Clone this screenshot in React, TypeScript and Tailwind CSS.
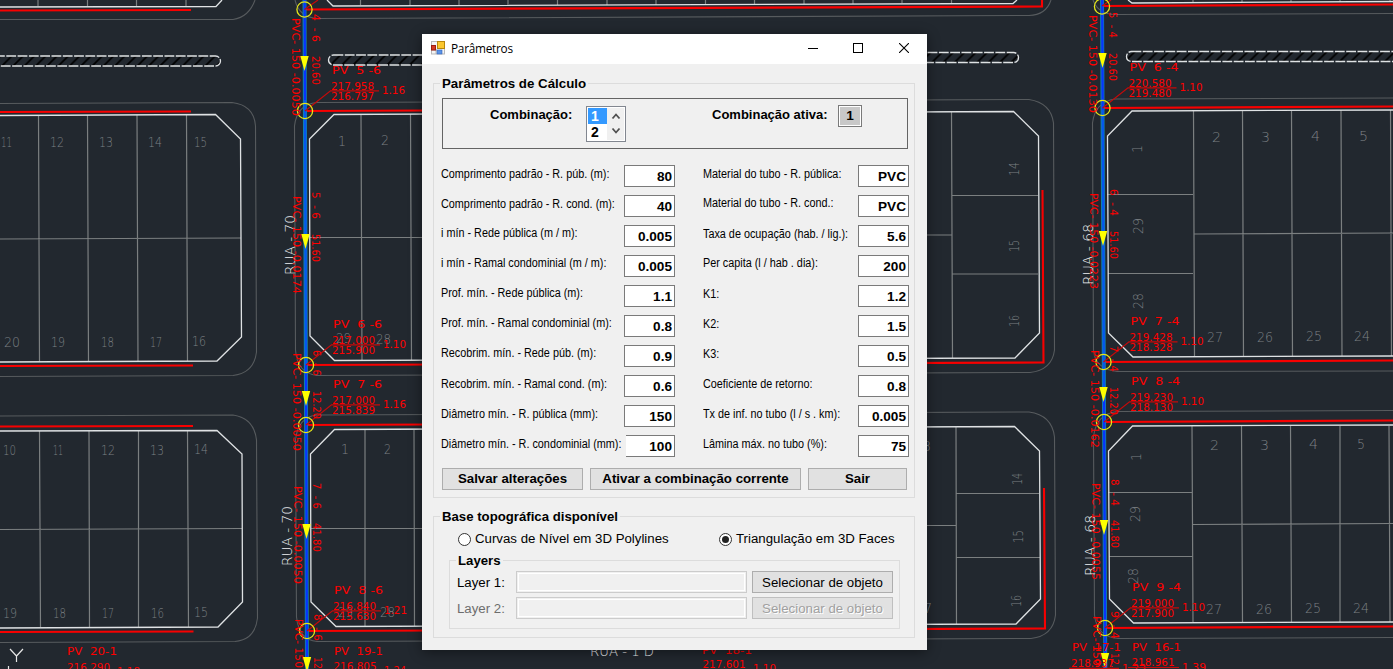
import React from "react";

type LabelProps = { x: number; y: number; w: number; children: string; turn?: number };

function RedText({ x, y, w, children, turn = 0 }: LabelProps) {
  return (
    <text
      x={x}
      y={y}
      textLength={w}
      lengthAdjust="spacingAndGlyphs"
      transform={`rotate(${turn} ${x} ${y})`}
      className="fill-[#ff0000] font-['DejaVu_Sans',sans-serif] text-[9.7px] whitespace-pre"
    >
      {children}
    </text>
  );
}

function LotText({ x, y, w, children, turn = 0 }: LabelProps) {
  return (
    <text
      x={x}
      y={y}
      textLength={w}
      lengthAdjust="spacingAndGlyphs"
      transform={`rotate(${turn} ${x} ${y})`}
      className="fill-[#7c8084] font-['DejaVu_Sans',sans-serif] text-[14.5px] font-extralight"
    >
      {children}
    </text>
  );
}

function StreetText({ x, y, w, children, turn = 0 }: LabelProps) {
  return (
    <text
      x={x}
      y={y}
      textLength={w}
      lengthAdjust="spacingAndGlyphs"
      transform={`rotate(${turn} ${x} ${y})`}
      className="fill-[#eef0f2] font-['DejaVu_Sans',sans-serif] text-[14.5px] font-extralight whitespace-pre"
    >
      {children}
    </text>
  );
}

const nodes = [
  { cx: 305, cy: 111, pv: "PV  5 -6", up: "217.958", low: "216.797", r: "1.16" },
  { cx: 306, cy: 365, pv: "PV  6 -6", up: "217.000", low: "215.900", r: "1.10" },
  { cx: 306, cy: 425, pv: "PV  7 -6", up: "217.000", low: "215.839", r: "1.16" },
  { cx: 307, cy: 631, pv: "PV  8 -6", up: "216.840", low: "215.630", r: "1.21" },
  { cx: 1102.5, cy: 108, pv: "PV  6 -4", up: "220.580", low: "219.480", r: "1.10" },
  { cx: 1103.5, cy: 362, pv: "PV  7 -4", up: "219.428", low: "218.328", r: "1.10" },
  { cx: 1104, cy: 422, pv: "PV  8 -4", up: "219.230", low: "218.130", r: "1.10" },
  { cx: 1105, cy: 628, pv: "PV  9 -4", up: "219.000", low: "217.900", r: "1.10" },
];

const pipeTexts: [number, number, number, string][] = [
  [291.5, 18, 98, "PVC- 150 -0.0050"],
  [311.5, 14, 28, "4  - 6"],
  [311.5, 56, 29, "20.60"],
  [292.5, 196, 98, "PVC- 150 -0.0174"],
  [312, 192, 27, "5  - 6"],
  [312, 234, 28, "51.60"],
  [293, 353, 98, "PVC- 150 -0.0050"],
  [312.5, 350, 26, "6  - 6"],
  [312.5, 391, 28, "12.20"],
  [293.5, 486, 98, "PVC- 150 -0.0050"],
  [313, 483, 26, "7  - 6"],
  [313, 523, 29, "41.80"],
  [294.5, 619, 49, "PVC- 150"],
  [314, 614, 27, "8  - 6"],
  [314, 657, 12, "12"],
  [1089, 15, 98, "PVC- 150 -0.0130"],
  [1108.5, 12, 26, "5  - 4"],
  [1108.5, 53, 28, "20.60"],
  [1090, 193, 96, "PVC- 150 -0.0223"],
  [1109.5, 189, 27, "6  - 4"],
  [1109.5, 231, 28, "51.60"],
  [1091, 350, 98, "PVC- 150 -0.0162"],
  [1110, 346, 26, "7  - 4"],
  [1110, 387, 28, "12.20"],
  [1091.5, 483, 97, "PVC- 150 -0.0055"],
  [1110.5, 479, 27, "8  - 4"],
  [1110.5, 520, 28, "41.80"],
  [1092.5, 616, 50, "PVC- 150"],
  [1111, 611, 28, "9  - 4"],
  [1111, 653, 15, "12."],
];

const lots: [number, number, number, string][] = [
  [1, 146.5, 11, "11"], [50, 146.5, 14, "12"], [99, 146.5, 14, "13"], [148, 146.5, 14, "14"], [194, 146.5, 13, "15"],
  [4, 347, 16, "20"], [51, 347, 14, "19"], [101, 346.5, 13, "18"], [150, 346.5, 12, "17"], [192, 346, 14, "16"],
  [3, 454.5, 13, "10"], [53, 454.5, 10, "11"], [101, 454.5, 14, "12"], [150, 454.5, 14, "13"], [194, 454, 14, "14"],
  [3, 618, 14, "19"], [53, 618, 13, "18"], [102, 617.5, 12, "17"], [151, 617.5, 13, "16"], [194, 617, 14, "15"],
  [338, 146, 8, "1"], [381, 145, 8, "2"], [336, 343, 15, "29"], [376, 344, 15, "28"],
  [341, 454, 8, "1"], [384, 453.5, 7, "2"], [338, 617, 15, "29"], [380, 617, 15, "28"],
  [1212, 142, 9, "2"], [1261, 142, 9, "3"], [1311, 141, 9, "4"], [1359, 140.5, 9, "5"],
  [1207, 341.5, 16, "27"], [1257, 341.5, 16, "26"], [1306, 341, 16, "25"], [1354, 340.5, 16, "24"],
  [1210, 449.5, 9, "2"], [1260, 449.5, 9, "3"], [1309, 449, 9, "4"], [1357, 449, 8, "5"],
  [1206, 613.5, 16, "27"], [1256, 613.5, 16, "26"], [1305, 613, 16, "25"], [1353, 612.5, 16, "24"],
  [923, 451, 8, "3"], [924, 613, 8, "7"],
];

const turnedLots: [number, number, number, string][] = [
  [1019, 176, 14, "14"], [1019, 252, 12, "15"], [1019, 327, 12, "16"],
  [1022, 485, 12, "14"], [1023, 543, 13, "15"], [1021, 607, 12, "16"],
  [1142, 153, 8, "1"], [1143, 234, 16, "29"], [1143, 309, 16, "28"],
  [1141, 461, 8, "1"], [1140, 522, 16, "29"], [1138, 584, 16, "28"],
];

const arrows: [number, number][] = [
  [304.5, 56], [305.5, 234], [306, 391], [306.5, 524], [307, 657],
  [1102.5, 53], [1103, 231], [1103.5, 387], [1104, 520], [1105, 653],
];

function Drawing() {
  return (
    <svg width="1393" height="669" viewBox="0 0 1393 669" className="block bg-[#22282f]">
      <defs>
        <pattern id="hatch" width="11.3" height="11.3" patternUnits="userSpaceOnUse">
          <path d="M-2 13.3L13.3 -2M-2 2L2 -2M9.300 13.300L13.300 9.300" stroke="#000" strokeWidth="1.7" />
        </pattern>
      </defs>

      <g fill="none" stroke="#575b5e" strokeWidth="1.1">
        <path d="M0 19.5H233Q249 17 255 0M295 0Q299 17 317 18.5L1029 15.5Q1046 15 1051 0M1093 0Q1098 14 1115 14.5L1393 13.5" />
        <path d="M0 103.5L232 102.5Q254 105 255.5 126L256.5 352Q254 373 233 375.5L0 376.5" />
        <path d="M0 416L233 415Q254 418 256.5 440L257.5 618Q255 640 235 641.5L0 642.5" />
        <path d="M295.5 350L294.5 126Q297 104 317 102.5L1029 99.5Q1051 103 1053.5 123L1054.5 350Q1052 370 1030 372.5L317 375.5Q297 373 295.5 350Z" />
        <path d="M295.5 440Q298 417 317 415L1029 412Q1052 415 1054.5 437L1055.5 615Q1053 636 1031 638.5L317 641.5Q299 640 296.5 617Z" />
        <path d="M1393 98L1115 99Q1095 102 1092.5 123L1093.5 350Q1095 369 1117 371.5L1393 371" />
        <path d="M1393 410.5L1117 411.5Q1096 414 1093.5 437L1094.5 615Q1097 637 1118 638.5L1393 637.5" />
      </g>

      <g fill="none" stroke="#7b7f80" strokeWidth="1.2">
        <path d="M38 0V6M87.5 0V6M136.5 0V6M186 0V6M38.5 115L39.5 361M87.5 115L88.5 361M137 115L138 361M186.5 115L187.5 361M0 239L241 238" />
        <path d="M39.5 431L40.5 627M89 431L89.5 627M138.5 431V627M187.5 431L188.5 627M0 529.5L242 528.5" />
        <path d="M361 114L362 360M410.5 114L411.5 360M310 237.5H430M951.5 112L952.5 358M920 235H952M952 195.5H1038M952 274H1038" />
        <path d="M365 430V626M414 430L414.5 626M311 528.5H430M956 427L956.5 624M920 525.5H956M956 493.5H1039M956 557.5H1040" />
        <path d="M1193.5 111L1194.5 356M1242.5 111L1243.5 356M1291.5 111L1292.5 356M1341 110L1342 356M1390.5 110L1391.5 356M1107 194.5H1193M1108 273.5H1193M1194 234L1393 233" />
        <path d="M1192 426L1193 622M1241.5 426L1242.5 622M1290.5 426L1291.5 622M1340 426V622M1389 426L1390 622M1108 492.5H1192M1109 556.5H1193M1193 524.5L1393 523.5" />
        <path d="M360.5 0V5M410 0V5M459 0V5M508 0V5M557.5 0V5M607 0V5M656 0V5M705.5 0V4M754.5 0V4M804 0V4M853 0V4M902 0V3M951.5 0V3M1193 0V2M1242 0V2M1291 0V2M1340 0V2M1390 0V2" />
      </g>

      <g fill="none" stroke="#dfe2e4" strokeWidth="1.3">
        <path d="M0 7L216 6.5L222 0M327 0L333 6L1013 3.5L1017 0M1128 0L1132 3L1393 1.5" />
        <path d="M0 115.5L215.500 114.500L240.500 139L241.500 337L217 361L0 362" />
        <path d="M0 431L217 430.500L242 454L242.500 602L218 627L0 628" />
        <path d="M309.500 139L334 114.500L1013.500 111.500L1038.500 136L1039.500 333L1015 358L334.500 360.500L310 336Z" />
        <path d="M310.500 454L334.500 429.500L1014.500 426.500L1039.500 451L1040.500 599L1016 624L336 626.500L311 602Z" />
        <path d="M1393 110L1132 111L1107.500 136L1108.500 333L1133 357L1393 356" />
        <path d="M1393 425L1132.500 426L1108.500 451L1109.500 599L1133.500 623L1393 622" />
      </g>

      <g stroke="#dfe2e4" strokeWidth="1.3" fill="url(#hatch)">
        <rect x="-10" y="56" width="230.500" height="10" rx="5" strokeDasharray="9.800 1.500" />
        <rect x="328.500" y="55" width="120" height="10" rx="5" strokeDasharray="9.800 1.500" />
        <rect x="900" y="52.500" width="118.500" height="10" rx="5" strokeDasharray="9.800 1.500" />
        <rect x="1126.500" y="51.500" width="290" height="10" rx="5" strokeDasharray="9.800 1.500" />
      </g>

      {lots.map(([x, y, w, s], i) => (
        <LotText key={i} x={x} y={y} w={w}>{s}</LotText>
      ))}
      {turnedLots.map(([x, y, w, s], i) => (
        <LotText key={i} x={x} y={y} w={w} turn={-90}>{s}</LotText>
      ))}

      <StreetText x={295} y={275} w={60} turn={-90}>RUA - 70</StreetText>
      <StreetText x={292} y={566} w={60} turn={-90}>RUA - 70</StreetText>
      <StreetText x={1093} y={285} w={61} turn={-90}>RUA - 68</StreetText>
      <StreetText x={1095} y={576} w={61} turn={-90}>RUA - 68</StreetText>
      <StreetText x={590} y={656} w={64}>RUA - 1 D</StreetText>
      <path d="M10 649L16.500 656L23 649M16.500 656V662M8.500 666V669" fill="none" stroke="#e6e6e6" strokeWidth="1.200" />

      <g fill="none" stroke="#f80000" strokeWidth="2.100">
        <path d="M0 10.500L191 10M0 112L191 111.500M0 366L193 365.500M0 426.500L193 426M0 632L193.500 631.500" />
        <path d="M304.500 9.500L1042 6.500V0M305 111L430 110.500M306 365L1043.500 362.500L1042.500 190" />
        <path d="M306 425L430 424.500M307 631L1045 628.500L1044 488" />
        <path d="M1102 6L1393 4.500M1102.500 108L1393 106.500M1103.500 362L1393 360.500M1104 422L1393 420.500M1105 628L1393 626.500" />
      </g>

      <path d="M304.500 0L307 669M1102 0L1105.300 669" stroke="#117fae" strokeWidth="4" />
      <path d="M304.700 0L305 100M306 365L307 669M1102.200 0L1102.700 110M1104 400L1105.300 669" stroke="#0734ff" strokeWidth="2.200" />
      <path d="M305 100L306 365M1102.700 110L1104 400" stroke="#0556f0" strokeWidth="2.200" />

      {arrows.map(([x, y], i) => (
        <path key={i} d={`M${x - 4.2} ${y}H${x + 4.2}L${x} ${y + 15}Z`} fill="#ffff00" />
      ))}

      <path d="M304.500 9.500L318 0M1102 6L1111 0" stroke="#c40a0a" strokeWidth="1.200" />
      <g fill="none" stroke="#e4e61a" strokeWidth="1.300">
        <circle cx="304.500" cy="9.500" r="7.600" />
        <circle cx="1102" cy="6.500" r="7.600" />
      </g>

      {nodes.map((n) => {
        const x = n.cx + 27;
        const y = n.cy;
        return (
          <g key={n.pv}>
            <path
              d={`M${n.cx} ${y}L${n.cx + 25.5} ${y - 20.2}H${n.cx + 74}`}
              fill="none"
              stroke="#c40a0a"
              strokeWidth="1.2"
            />
            <circle cx={n.cx} cy={y} r="7.6" fill="none" stroke="#e4e61a" strokeWidth="1.3" />
            <RedText x={x} y={y - 37} w={49}>{n.pv}</RedText>
            <RedText x={x - 1} y={y - 21.3} w={43}>{n.up}</RedText>
            <RedText x={x - 1} y={y - 11} w={43}>{n.low}</RedText>
            <RedText x={x + 50} y={y - 17} w={23}>{n.r}</RedText>
          </g>
        );
      })}

      {pipeTexts.map(([x, y, w, s], i) => (
        <RedText key={i} x={x} y={y} w={w} turn={90}>{s}</RedText>
      ))}

      <RedText x={67} y={655} w={50}>PV  20-1</RedText>
      <RedText x={67} y={671} w={43}>216.290</RedText>
      <RedText x={117} y={674.5} w={23}>1.18</RedText>
      <RedText x={334} y={654.500} w={49}>PV  19-1</RedText>
      <RedText x={333.5} y={670} w={43}>216.805</RedText>
      <RedText x={384} y={674} w={22}>1.24</RedText>
      <RedText x={702} y={654} w={50}>PV  18-1</RedText>
      <RedText x={702.5} y={668} w={43}>217.601</RedText>
      <RedText x={753} y={672} w={23}>1.10</RedText>
      <RedText x={1072} y={651} w={49}>PV  17-1</RedText>
      <RedText x={1071} y={667} w={43}>218.937</RedText>
      <RedText x={1122} y={671.5} w={24}>1.23</RedText>
      <RedText x={1132} y={650.500} w={49}>PV  16-1</RedText>
      <RedText x={1131.500} y={666} w={43}>218.961</RedText>
      <RedText x={1182} y={671} w={24}>1.39</RedText>
      <path d="M1069 668.300H1119M1128 667.500H1179" stroke="#c40a0a" strokeWidth="1.200" />
    </svg>
  );
}

const leftRows = [
  { label: "Comprimento padrão - R. púb. (m):", value: "80", nudge: "pb-1" },
  { label: "Comprimento padrão - R. cond. (m):", value: "40", nudge: "pb-1" },
  { label: "i mín - Rede pública (m / m):", value: "0.005", nudge: "pb-1.5" },
  { label: "i mín - Ramal condominial (m / m):", value: "0.005", nudge: "pb-1.5" },
  { label: "Prof. mín. - Rede pública (m):", value: "1.1", nudge: "pb-1.5" },
  { label: "Prof. mín. - Ramal condominial (m):", value: "0.8", nudge: "pb-1.5" },
  { label: "Recobrim. mín. - Rede púb. (m):", value: "0.9", nudge: "pb-1.5" },
  { label: "Recobrim. mín. - Ramal cond. (m):", value: "0.6", nudge: "pb-1" },
  { label: "Diâmetro mín. - R. pública (mm):", value: "150", nudge: "pb-1" },
  { label: "Diâmetro mín. - R. condominial (mm):", value: "100", nudge: "pb-1" },
];

const rightRows = [
  { label: "Material do tubo - R. pública:", value: "PVC", nudge: "pb-1" },
  { label: "Material do tubo - R. cond.:", value: "PVC", nudge: "pb-1.5" },
  { label: "Taxa de ocupação (hab. / lig.):", value: "5.6", nudge: "pb-1" },
  { label: "Per capita (l / hab . dia):", value: "200", nudge: "pb-1.5" },
  { label: "K1:", value: "1.2", nudge: "pb-1" },
  { label: "K2:", value: "1.5", nudge: "pb-1" },
  { label: "K3:", value: "0.5", nudge: "pb-1" },
  { label: "Coeficiente de retorno:", value: "0.8", nudge: "pb-1" },
  { label: "Tx de inf. no tubo (l / s . km):", value: "0.005", nudge: "pb-1" },
  { label: "Lâmina máx. no tubo (%):", value: "75", nudge: "pb-1" },
];

function Row({ label, value, nudge, clipped }: { label: string; value: string; nudge: string; clipped?: boolean }) {
  return (
    <div className="flex h-[22px] items-center justify-between">
      <span className={`w-0 origin-left scale-x-[0.866] text-[12.5px] leading-4 whitespace-nowrap ${nudge}`}>{label}</span>
      <span
        className={`flex h-[22px] items-center justify-end border border-[#7a7a7a] bg-white pt-px pr-0.5 text-[13.6px] leading-none font-bold ${clipped ? "w-[49px] border-l-0" : "w-[51px]"}`}
      >
        {value}
      </span>
    </div>
  );
}

function Button({ children, className }: { children: string; className: string }) {
  return (
    <button className={`flex h-[22px] items-center justify-center border border-[#adadad] bg-[#e1e1e1] leading-none whitespace-nowrap ${className}`}>
      {children}
    </button>
  );
}

function Chevron({ d }: { d: string }) {
  return (
    <svg width="10" height="8" viewBox="0 0 10 8" className="block">
      <path d={d} fill="none" stroke="#505050" strokeWidth="1.8" />
    </svg>
  );
}

function Dialog() {
  return (
    <div className="flex h-[616px] w-[505px] flex-col bg-[#f0f0f0] text-[13.25px] text-black shadow-[0_2px_12px_rgba(0,0,0,0.45)]">
      <div className="flex h-[30px] shrink-0 items-center bg-white pl-[9px]">
        <svg width="14" height="14" viewBox="0 0 14 14" className="-mt-0.5">
          <rect x="0.5" y="0.5" width="13" height="12.500" fill="#f4f4f4" stroke="#b9b9b9" />
          <path d="M0 9H6M5 9V13" stroke="#b9b9b9" />
          <rect x="6.500" y="0.500" width="7" height="7" fill="#fbc72e" stroke="#b8860b" />
          <rect x="0.500" y="4.500" width="4" height="4.500" fill="#d33a22" stroke="#9c1d10" />
          <rect x="6" y="9" width="5" height="4" fill="#5b93e6" stroke="#3263b8" strokeWidth="0.600" />
        </svg>
        <span className="ml-[6px] font-['Open_Sans',sans-serif] text-[11.8px] leading-none tracking-[-0.25px]">Parâmetros</span>
        <div className="mr-[18px] mb-[2px] ml-auto flex items-center text-black">
          <svg width="10" height="10" viewBox="0 0 10 10" className="mr-[35px]"><path d="M0 5.500H10" stroke="currentColor" /></svg>
          <svg width="10" height="10" viewBox="0 0 10 10" className="mr-[36px]"><rect x="0.500" y="0.500" width="9" height="9" fill="none" stroke="currentColor" /></svg>
          <svg width="10" height="10" viewBox="0 0 10 10"><path d="M0 0L10 10M10 0L0 10" stroke="currentColor" strokeWidth="1.100" /></svg>
        </div>
      </div>

      <div className="flex flex-col pt-[11px] pr-[12px] pl-[11px]">
        <fieldset className="h-[423px] w-[482px] min-w-0 border border-[#dcdcdc] pr-[5px] pl-[7px]">
          <legend className="ml-[-1px] px-0.5 pb-px text-[13.3px] leading-4 font-bold">
            <span className="relative top-px">Parâmetros de Cálculo</span>
          </legend>
          <div className="mt-[6px] ml-[1px] flex h-[51px] w-[466px] items-start border border-[#646464] pt-[7px] pl-[47px]">
            <span className="w-[96px] text-[13px] leading-[18px] font-bold">Combinação:</span>
            <div className="flex h-[36px] w-[40px] border border-[#828790] bg-white p-px text-[14px] font-bold">
              <div className="flex w-[19px] flex-col leading-4">
                <span className="bg-[#3399ff] pl-[3px] text-white">1</span>
                <span className="pl-[3px]">2</span>
              </div>
              <div className="flex flex-1 flex-col items-center justify-between bg-[#f0f0f0] pt-[4px] pb-[5px]">
                <Chevron d="M1.500 6.500L5 2.500L8.500 6.500" />
                <Chevron d="M1.500 1.500L5 5.500L8.500 1.500" />
              </div>
            </div>
            <span className="ml-[86px] w-[126px] text-[13px] leading-[18px] font-bold">Combinação ativa:</span>
            <span className="mt-[-1px] flex h-[22px] w-[24px] items-center justify-center border border-[#7a7a7a] bg-white p-px">
              <span className="flex h-full w-full items-center justify-center bg-[#c8c8c8] text-[13.6px] leading-none font-bold">1</span>
            </span>
          </div>

          <div className="mt-[16px] flex gap-[28px]">
            <div className="flex w-[234px] shrink-0 flex-col gap-2">
              {leftRows.map((r, i) => (
                <Row key={i} {...r} clipped={i === 9} />
              ))}
            </div>
            <div className="flex w-[206px] shrink-0 flex-col gap-2">
              {rightRows.map((r, i) => (
                <Row key={i} {...r} />
              ))}
            </div>
          </div>

          <div className="mt-[11px] ml-[1px] flex gap-[7px] font-bold">
            <Button className="w-[141px]">Salvar alterações</Button>
            <Button className="w-[211px]">Ativar a combinação corrente</Button>
            <Button className="w-[99px]">Sair</Button>
          </div>
        </fieldset>

        <fieldset className="mt-[10px] h-[130px] w-[482px] min-w-0 border border-[#dcdcdc] pr-[13px] pl-[15px]">
          <legend className="ml-[-9px] px-0.5 text-[13.2px] leading-4 font-bold">
            <span className="relative top-px">Base topográfica disponível</span>
          </legend>
          <div className="mt-[7px] flex items-center pl-[9px] leading-4">
            <span className="mr-[4px] h-[13px] w-[13px] rounded-full border border-[#333] bg-white" />
            <span className="w-[244px]">Curvas de Nível em 3D Polylines</span>
            <span className="mr-[4px] flex h-[13px] w-[13px] items-center justify-center rounded-full border border-[#333] bg-white">
              <span className="h-[7px] w-[7px] rounded-full bg-[#222]" />
            </span>
            <span className="whitespace-nowrap">Triangulação em 3D Faces</span>
          </div>
          <fieldset className="mt-[5px] h-[77px] w-[451px] min-w-0 border border-[#dcdcdc] pr-[5px] pl-[7px]">
            <legend className="ml-[-1px] px-0.5 text-[13.2px] leading-4 font-bold">
              <span className="relative top-px">Layers</span>
            </legend>
            <div className="mt-[3px] flex flex-col gap-1">
              <div className="flex items-start">
                <span className="w-[59px] pt-[4px] leading-4">Layer 1:</span>
                <span className="mr-[5px] h-[22px] w-[231px] border border-[#ccc] p-px"><span className="block h-full w-full border border-white" /></span>
                <Button className="w-[141px] pt-px">Selecionar de objeto</Button>
              </div>
              <div className="flex items-start text-[#6d6d6d]">
                <span className="w-[59px] pt-[4px] leading-4">Layer 2:</span>
                <span className="mr-[5px] h-[22px] w-[231px] border border-[#ccc] p-px"><span className="block h-full w-full border border-white" /></span>
                <Button className="w-[141px] border-[#bfbfbf] bg-[#cccccc] pt-px text-[#a0a0a0] [text-shadow:1px_1px_0_#fff]">Selecionar de objeto</Button>
              </div>
            </div>
          </fieldset>
        </fieldset>
      </div>
    </div>
  );
}

export default function App() {
  return (
    <div className="relative h-[669px] w-[1393px] overflow-hidden bg-[#22282f] font-['Liberation_Sans',Arial,sans-serif]">
      <Drawing />
      <div className="absolute top-[34px] left-[422px]">
        <Dialog />
      </div>
    </div>
  );
}
